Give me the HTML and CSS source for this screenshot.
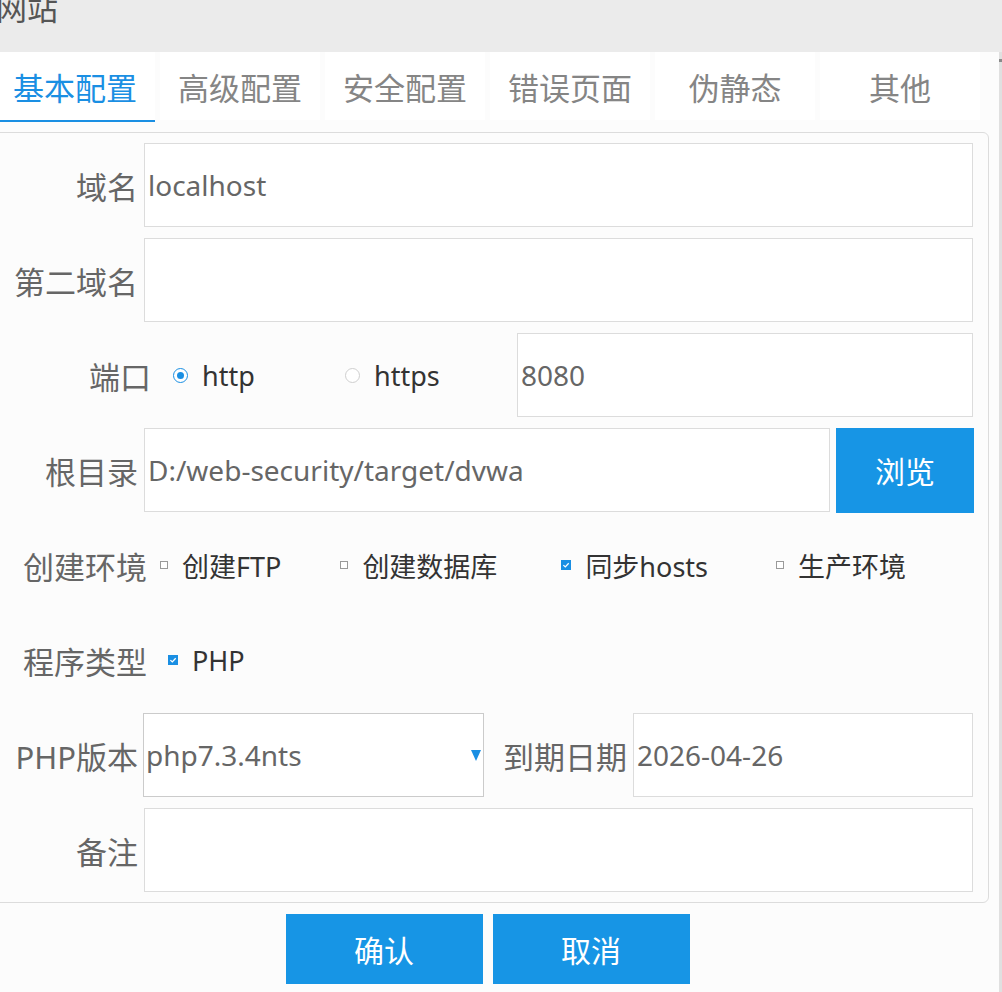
FILE: index.html
```html
<!DOCTYPE html>
<html lang="zh-CN">
<head>
<meta charset="utf-8">
<title>网站</title>
<link rel="stylesheet" href="styles.css">
</head>
<body>
<div class="titlebar"><div class="title">网站</div></div>
<div class="main">
  <div class="content">
    <div class="tabs">
      <div class="tab active">基本配置</div>
      <div class="tab">高级配置</div>
      <div class="tab">安全配置</div>
      <div class="tab">错误页面</div>
      <div class="tab">伪静态</div>
      <div class="tab">其他</div>
    </div>
    <div class="panel">
      <div class="row">
        <div class="lbl">域名</div>
        <div class="field">localhost</div>
      </div>
      <div class="row">
        <div class="lbl">第二域名</div>
        <div class="field"></div>
      </div>
      <div class="row">
        <div class="lbl lbl-port">端口</div>
        <div class="opt"><span class="radio on"></span><span class="opt-text">http</span></div>
        <div class="opt"><span class="radio"></span><span class="opt-text">https</span></div>
        <div class="field field-port">8080</div>
      </div>
      <div class="row">
        <div class="lbl">根目录</div>
        <div class="field">D:/web-security/target/dvwa</div>
        <button class="btn btn-browse">浏览</button>
      </div>
      <div class="row">
        <div class="lbl lbl-wide">创建环境</div>
        <div class="checks">
          <div class="chk-item chk-item-first"><span class="box"></span><span class="chk-text">创建FTP</span></div>
          <div class="chk-item"><span class="box"></span><span class="chk-text">创建数据库</span></div>
          <div class="chk-item chk-item-wide"><svg class="box-on" width="10" height="10" viewBox="0 0 10 10"><rect width="10" height="10" fill="#1a8fe3"/><path d="M2.4 5.1 L4.3 6.9 L7.7 3.3" stroke="#fff" stroke-width="1.3" fill="none"/></svg><span class="chk-text">同步hosts</span></div>
          <div class="chk-item"><span class="box"></span><span class="chk-text">生产环境</span></div>
        </div>
      </div>
      <div class="row">
        <div class="lbl lbl-wide">程序类型</div>
        <div class="checks checks-type">
          <div class="chk-item"><svg class="box-on" width="10" height="10" viewBox="0 0 10 10"><rect width="10" height="10" fill="#1a8fe3"/><path d="M2.4 5.1 L4.3 6.9 L7.7 3.3" stroke="#fff" stroke-width="1.3" fill="none"/></svg><span class="chk-text">PHP</span></div>
        </div>
      </div>
      <div class="row">
        <div class="lbl">PHP版本</div>
        <div class="select"><span>php7.3.4nts</span><span class="caret"></span></div>
        <div class="lbl-inline">到期日期</div>
        <div class="field">2026-04-26</div>
      </div>
      <div class="row">
        <div class="lbl">备注</div>
        <div class="field"></div>
      </div>
    </div>
    <div class="actions">
      <button class="btn btn-action">确认</button>
      <button class="btn btn-action">取消</button>
    </div>
  </div>
  <div class="edge"><div class="edge-mark"></div></div>
</div>
</body>
</html>
```
FILE: styles.css
```css
html, body {
  margin: 0;
  padding: 0;
}
body {
  width: 1002px;
  height: 992px;
  overflow: hidden;
  background: #fcfcfc;
  font-family: "Noto Sans", "Noto Sans CJK SC", sans-serif;
  color: #666;
}
.titlebar {
  height: 52px;
  background: #ebebeb;
  overflow: hidden;
}
.title {
  font-size: 31px;
  line-height: 31px;
  color: #555;
  margin-top: -7px;
  margin-left: -4px;
}
.main {
  display: flex;
  height: 940px;
}
.content {
  width: 999px;
  flex: none;
}
.edge {
  width: 3px;
  background: #e0e0e0;
}
.edge-mark {
  height: 3px;
  margin-top: 7px;
  background: #8a8a8a;
}
.tabs {
  display: flex;
  gap: 5px;
  margin-left: -5px;
  height: 70px;
}
.tab {
  width: 160px;
  height: 68px;
  background: #fff;
  border-bottom: 2px solid transparent;
  background-clip: padding-box;
  display: flex;
  align-items: center;
  justify-content: center;
  font-size: 31px;
  color: #858585;
}
.tab.active {
  color: #1a8fe3;
  border-bottom-color: #1a8fe3;
}
.panel {
  margin-top: 10px;
  margin-left: -10px;
  width: 999px;
  box-sizing: border-box;
  border: 1px solid #dcdcdc;
  border-radius: 6px;
  background: #fcfcfc;
  padding: 10px 15px 10px 0;
  display: flex;
  flex-direction: column;
  gap: 11px;
}
.row {
  display: flex;
  align-items: center;
  height: 84px;
}
.lbl {
  width: 147px;
  flex: none;
  text-align: right;
  font-size: 31px;
  color: #666;
  margin-right: 6px;
  white-space: nowrap;
}
.lbl-port {
  width: 160px;
  margin-right: 22px;
}
.lbl-wide {
  width: 156px;
  margin-right: 13px;
}
.field {
  flex: 1;
  height: 84px;
  box-sizing: border-box;
  border: 1px solid #dcdcdc;
  background: #fff;
  padding-left: 3px;
  display: flex;
  align-items: center;
  font-size: 28px;
  color: #666;
  white-space: nowrap;
}
.opt {
  width: 172px;
  flex: none;
  display: flex;
  align-items: center;
}
.radio {
  width: 15px;
  height: 15px;
  box-sizing: border-box;
  border: 1px solid #cfcfcf;
  border-radius: 50%;
  background: #fff;
  flex: none;
  display: flex;
  align-items: center;
  justify-content: center;
}
.radio.on {
  border-color: #1a8fe3;
}
.radio.on::after {
  content: "";
  width: 7px;
  height: 7px;
  border-radius: 50%;
  background: #1a8fe3;
}
.opt-text {
  margin-left: 14px;
  font-size: 27px;
  color: #333;
}
.btn {
  border: none;
  margin: 0;
  padding: 0;
  background: #1795e5;
  color: #fff;
  font-family: "Noto Sans", "Noto Sans CJK SC", sans-serif;
  font-size: 30px;
  cursor: pointer;
}
.btn-browse {
  width: 138px;
  height: 85px;
  margin-left: 6px;
  margin-right: -1px;
}
.checks {
  display: flex;
  align-items: center;
}
.checks-type {
  margin-left: 8px;
}
.chk-item {
  display: flex;
  align-items: center;
  margin-right: 64px;
}
.chk-item-first {
  margin-right: 59px;
}
.chk-item-wide {
  margin-right: 68px;
}
.box {
  width: 6px;
  height: 6px;
  border: 1px solid #9a9a9a;
  background: #fff;
  flex: none;
}
.box-on {
  flex: none;
  display: block;
}
.chk-text {
  margin-left: 14px;
  font-size: 27px;
  color: #333;
  white-space: nowrap;
}
.select {
  width: 341px;
  flex: none;
  height: 84px;
  box-sizing: border-box;
  border: 1px solid #cbcbcb;
  background: #fff;
  margin-left: -1px;
  padding: 0 2px 0 2px;
  display: flex;
  align-items: center;
  justify-content: space-between;
  font-size: 28px;
  color: #666;
}
.caret {
  width: 0;
  height: 0;
  border-left: 5.5px solid transparent;
  border-right: 5.5px solid transparent;
  border-top: 11px solid #1a8fe3;
}
.lbl-inline {
  margin-left: 19px;
  margin-right: 6px;
  font-size: 31px;
  color: #666;
  white-space: nowrap;
}
.actions {
  margin-top: 11px;
  margin-left: -10px;
  width: 999px;
  padding-right: 4px;
  box-sizing: border-box;
  display: flex;
  justify-content: center;
  gap: 10px;
}
.btn-action {
  width: 197px;
  height: 70px;
}
```
